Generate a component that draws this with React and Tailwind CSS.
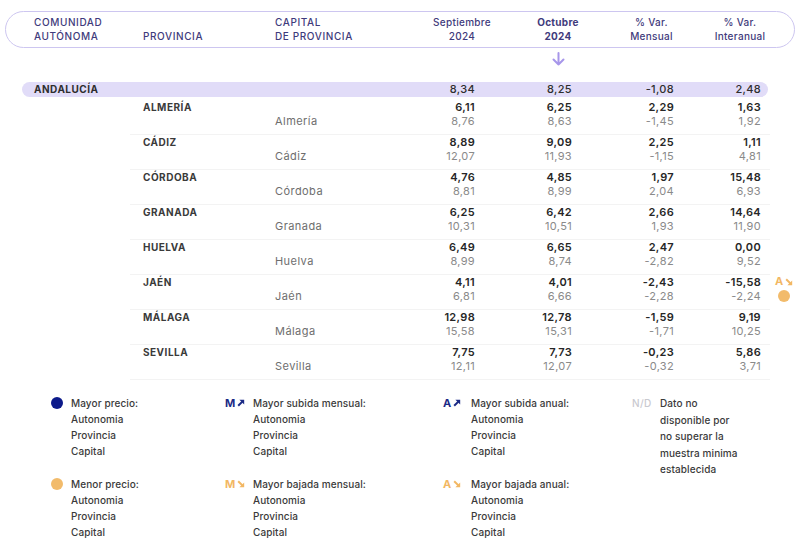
import React from 'react'

// Precio medio — tabla por comunidad / provincia / capital con leyenda.

const font = { fontFamily: 'Inter, "Noto Sans", sans-serif' }

const filas = [
  { prov: 'ALMERÍA', cap: 'Almería', a: ['6,11', '6,25', '2,29', '1,63'], b: ['8,76', '8,63', '-1,45', '1,92'] },
  { prov: 'CÁDIZ', cap: 'Cádiz', a: ['8,89', '9,09', '2,25', '1,11'], b: ['12,07', '11,93', '-1,15', '4,81'] },
  { prov: 'CÓRDOBA', cap: 'Córdoba', a: ['4,76', '4,85', '1,97', '15,48'], b: ['8,81', '8,99', '2,04', '6,93'] },
  { prov: 'GRANADA', cap: 'Granada', a: ['6,25', '6,42', '2,66', '14,64'], b: ['10,31', '10,51', '1,93', '11,90'] },
  { prov: 'HUELVA', cap: 'Huelva', a: ['6,49', '6,65', '2,47', '0,00'], b: ['8,99', '8,74', '-2,82', '9,52'] },
  { prov: 'JAÉN', cap: 'Jaén', a: ['4,11', '4,01', '-2,43', '-15,58'], b: ['6,81', '6,66', '-2,28', '-2,24'], marca: true },
  { prov: 'MÁLAGA', cap: 'Málaga', a: ['12,98', '12,78', '-1,59', '9,19'], b: ['15,58', '15,31', '-1,71', '10,25'] },
  { prov: 'SEVILLA', cap: 'Sevilla', a: ['7,75', '7,73', '-0,23', '5,86'], b: ['12,11', '12,07', '-0,32', '3,71'] },
]

function Flecha({ up, color, size = 8 }) {
  return (
    <svg width={size} height={size} viewBox="0 0 10 10" className="inline-block">
      {up ? (
        <>
          <path d="M1.5 8.5 L7.5 2.5" stroke={color} strokeWidth="2.4" />
          <path d="M3 1 H9 V7 Z" fill={color} />
        </>
      ) : (
        <>
          <path d="M1.5 1.5 L7.5 7.5" stroke={color} strokeWidth="2.4" />
          <path d="M3 9 H9 V3 Z" fill={color} />
        </>
      )}
    </svg>
  )
}

function Marca({ letra, up, color }) {
  return (
    <span className="flex items-center gap-[2px] text-[11px] font-bold leading-none tracking-[0.02em]" style={{ color }}>
      {letra}
      <Flecha up={up} color={color} />
    </span>
  )
}

function Leyenda({ icon, titulo, lineas, ancho = 'w-[28px]' }) {
  return (
    <div className="flex">
      <div className={`${ancho} shrink-0 flex h-[16px] items-center`}>{icon}</div>
      <div className="text-[10px] leading-[16px] font-medium tracking-[0.01em] text-[#3a3a3a]">
        <div>{titulo}</div>
        {lineas.map((l) => <div key={l}>{l}</div>)}
      </div>
    </div>
  )
}

const sub = ['Autonomia', 'Provincia', 'Capital']

export default function App() {
  return (
    <div className="w-[800px] h-[547px] bg-white overflow-hidden" style={font}>
      {/* cabecera */}
      <div className="mx-[5px] mt-[11px] h-[37px] rounded-full border border-[#cdc6f0] flex items-end pl-[28px] pb-[4px] text-[10px] leading-[14px] text-[#3f3b7c] font-medium">
        <div className="w-[109px] tracking-[0.06em]">COMUNIDAD<br />AUTÓNOMA</div>
        <div className="w-[132px] tracking-[0.06em]">PROVINCIA</div>
        <div className="w-[139px] tracking-[0.06em]">CAPITAL<br />DE PROVINCIA</div>
        <div className="w-[96px] text-center tracking-[0.03em]">Septiembre<br />2024</div>
        <div className="w-[96px] text-center font-bold tracking-[0.03em]">Octubre<br />2024</div>
        <div className="w-[91px] text-center tracking-[0.03em]">% Var.<br />Mensual</div>
        <div className="w-[86px] text-center tracking-[0.03em]">% Var.<br />Interanual</div>
      </div>

      <div className="flex h-[34px] pl-[552px] pt-[4px]">
        <svg width="13" height="14" viewBox="0 0 13 14">
          <path d="M6.5 1 V12.5 M1.5 7.5 L6.5 12.5 L11.5 7.5" stroke="#a796ea" strokeWidth="2" fill="none" strokeLinecap="round" strokeLinejoin="round" />
        </svg>
      </div>

      {/* comunidad */}
      <div className="mx-[22px] w-[746px] h-[15px] rounded-full bg-[#e1dcf8] flex items-center pl-[12px] text-[11px] tracking-[0.03em] text-[#2e2e2e]">
        <div className="w-[241px] font-bold tracking-[0.05em] text-[10px]">ANDALUCÍA</div>
        <div className="w-[200px] text-right font-medium">8,34</div>
        <div className="w-[97px] text-right font-medium">8,25</div>
        <div className="w-[102px] text-right font-medium">-1,08</div>
        <div className="w-[87px] text-right font-medium">2,48</div>
      </div>

      {/* provincias */}
      <div className="mt-[3px]">
        {filas.map((f) => (
          <div key={f.prov} className="relative ml-[130px] w-[640px] border-b border-[#f3f3f3] pl-[13px] pb-[6px] flex">
            <div className="w-[132px] text-[10px] font-bold tracking-[0.05em] text-[#3a3a3a] leading-[14px]">{f.prov}</div>
            <div className="w-[120px] pt-[14px] text-[11px] leading-[14px] tracking-[0.04em] text-[#6e6e6e]">{f.cap}</div>
            {[80, 97, 102, 87].map((w, i) => (
              <div key={i} className="text-right text-[11px] leading-[14px] tracking-[0.03em]" style={{ width: w }}>
                <div className="font-semibold text-[#262626]">{f.a[i]}</div>
                <div className="text-[#8a8a8a]">{f.b[i]}</div>
              </div>
            ))}
            {f.marca && (
              <div className="absolute left-[645px] top-[1px] flex flex-col items-center gap-[3px]">
                <Marca letra="A" up={false} color="#f2b763" />
                <span className="w-[12px] h-[12px] rounded-full bg-[#f2bb6b]" />
              </div>
            )}
          </div>
        ))}
      </div>

      {/* leyenda */}
      <div className="mt-[15px] pl-[51px] flex">
        <div className="w-[174px] flex flex-col gap-[17px]">
          <Leyenda ancho="w-[20px]" icon={<span className="w-[12px] h-[12px] rounded-full bg-[#0c1a8a]" />} titulo="Mayor precio:" lineas={sub} />
          <Leyenda ancho="w-[20px]" icon={<span className="w-[12px] h-[12px] rounded-full bg-[#f2bb6b]" />} titulo="Menor precio:" lineas={sub} />
        </div>
        <div className="w-[218px] flex flex-col gap-[17px]">
          <Leyenda icon={<Marca letra="M" up color="#1b2a86" />} titulo="Mayor subida mensual:" lineas={sub} />
          <Leyenda icon={<Marca letra="M" up={false} color="#f2b763" />} titulo="Mayor bajada mensual:" lineas={sub} />
        </div>
        <div className="w-[189px] flex flex-col gap-[17px]">
          <Leyenda icon={<Marca letra="A" up color="#1b2a86" />} titulo="Mayor subida anual:" lineas={sub} />
          <Leyenda icon={<Marca letra="A" up={false} color="#f2b763" />} titulo="Mayor bajada anual:" lineas={sub} />
        </div>
        <div className="flex">
          <div className="w-[28px] text-[10px] leading-[16px] font-medium tracking-[0.04em] text-[#c9c9cf]">N/D</div>
          <div className="text-[10px] leading-[16.5px] font-medium tracking-[0.01em] text-[#3a3a3a]">
            <div>Dato no</div>
            <div>disponible por</div>
            <div>no superar la</div>
            <div>muestra minima</div>
            <div>establecida</div>
          </div>
        </div>
      </div>
    </div>
  )
}
